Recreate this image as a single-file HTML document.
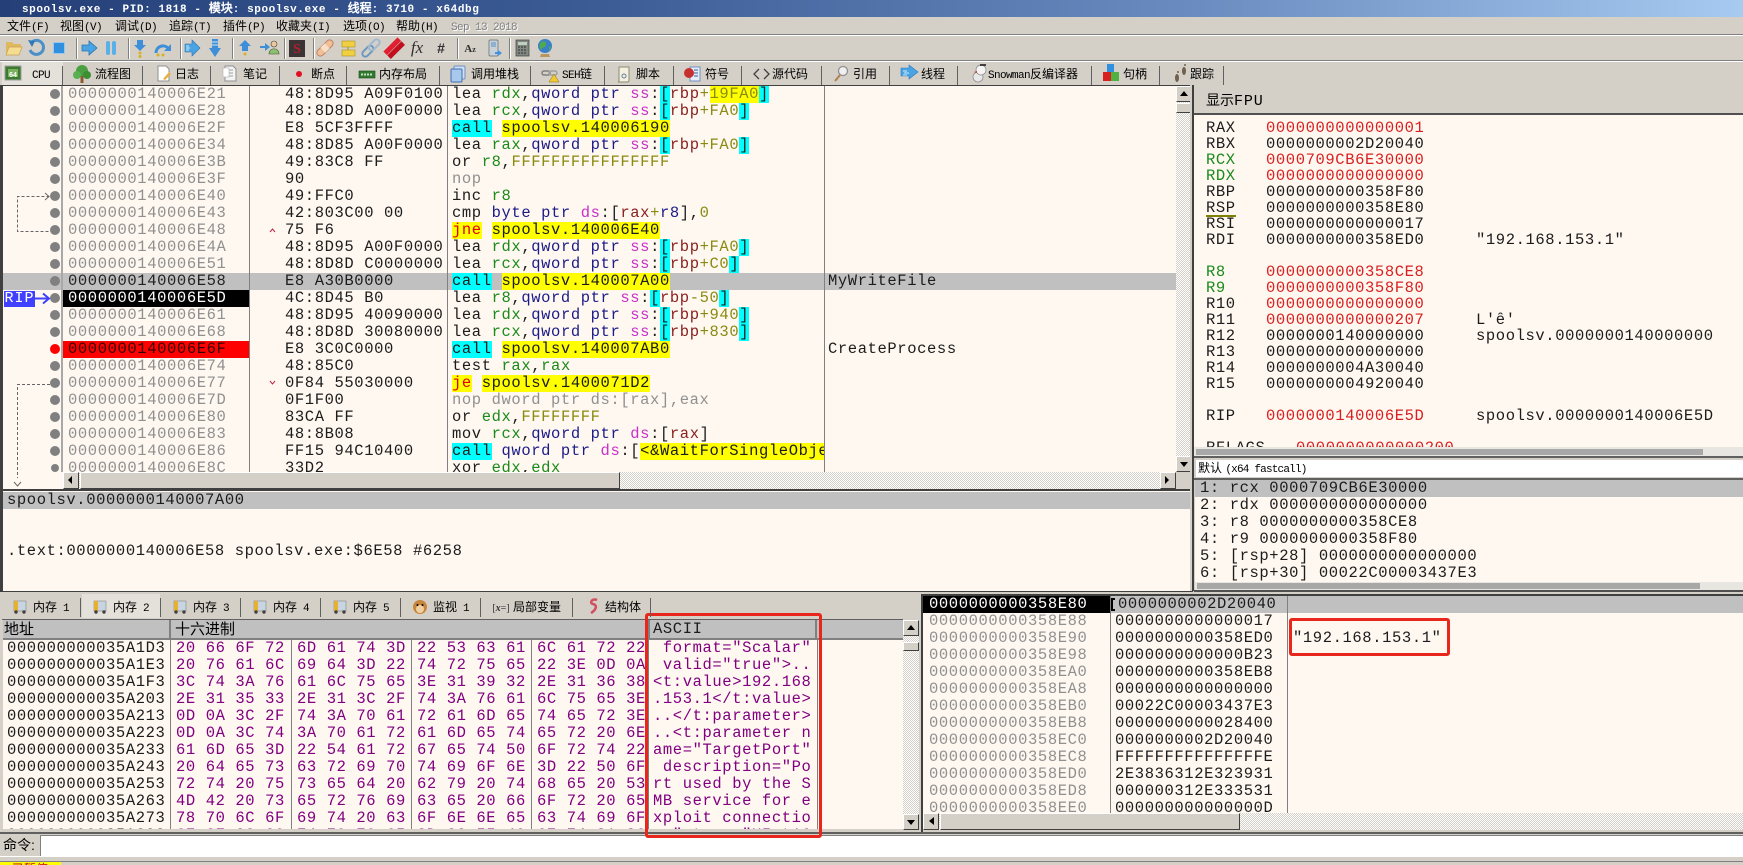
<!DOCTYPE html>
<html lang="zh"><head><meta charset="utf-8"><title>x64dbg</title>
<style>
html,body{margin:0;padding:0;background:#d4d0c8}
#app{position:relative;width:1743px;height:865px;overflow:hidden;background:#d4d0c8;font-family:"Liberation Mono","WenQuanYi Zen Hei",monospace;color:#000}
#app div{position:absolute;box-sizing:border-box}
.ui{font-family:"Liberation Sans","WenQuanYi Zen Hei","Noto Sans CJK SC",sans-serif;font-size:12px;line-height:14px;white-space:pre}
.ui i{font:normal 11px/14px "Liberation Mono",monospace;letter-spacing:-.6px}
.m{font-family:"Liberation Mono",monospace;font-size:15.5px;letter-spacing:.6px;line-height:17px;white-space:pre;color:#1c1c1c}
.pane{background:#fff8f0;overflow:hidden}
.chk{background:conic-gradient(#d4d0c8 25%,#fff 0 50%,#d4d0c8 0 75%,#fff 0) 0 0/2px 2px}
.btn{background:#d4d0c8;border:1px solid;border-color:#fff #404040 #404040 #fff}
.g{color:#1a8a1a}.n{color:#1a1a88}.p{color:#c830c8}.b{color:#8a2020}.o{color:#8a8a10}.r{color:#e00000}.a{color:#909090}.h{color:#d82020}
.c{background:#0ff;display:inline-block;height:17px}
.y{background:#ff0;display:inline-block;height:17px}
.v{background:#808080;width:1px}
.redbox{border:3px solid #e8261c;border-radius:3px}
</style></head><body>
<div id="app">

<!-- title -->
<div style="left:0;top:0;width:1743px;height:17px;background:linear-gradient(90deg,#253f78 0,#3c5c96 600px,#6a8cc0 1200px,#a6caf0 1743px)"></div>
<div style="left:22px;top:2px;color:#fff;font:bold 11px/14px 'Liberation Mono','WenQuanYi Zen Hei',monospace;letter-spacing:.58px;white-space:pre">spoolsv.exe - PID: 1818 - <span style="font-size:12px;letter-spacing:0">模块</span>: spoolsv.exe - <span style="font-size:12px;letter-spacing:0">线程</span>: 3710 - x64dbg</div>

<!-- menu -->
<div class="ui" style="left:7px;top:19px">文件<i>(F)</i></div>
<div class="ui" style="left:60px;top:19px">视图<i>(V)</i></div>
<div class="ui" style="left:115px;top:19px">调试<i>(D)</i></div>
<div class="ui" style="left:169px;top:19px">追踪<i>(T)</i></div>
<div class="ui" style="left:223px;top:19px">插件<i>(P)</i></div>
<div class="ui" style="left:276px;top:19px">收藏夹<i>(I)</i></div>
<div class="ui" style="left:343px;top:19px">选项<i>(O)</i></div>
<div class="ui" style="left:396px;top:19px">帮助<i>(H)</i></div>
<div class="ui" style="left:451px;top:19px;color:#808080;text-shadow:1px 1px #fff"><i>Sep 13 2018</i></div>
<div style="left:0;top:34px;width:1743px;height:1px;background:#808080"></div>
<div style="left:0;top:35px;width:1743px;height:1px;background:#fff"></div>
<div style="left:0;top:60px;width:1743px;height:1px;background:#808080"></div>
<div style="left:0;top:61px;width:1743px;height:1px;background:#fff"></div>

<!-- tabs text -->
<div style="left:2px;top:62px;width:61px;height:24px;background:#e4e1da"></div>
<div class="ui" style="left:32px;top:67px"><i>CPU</i></div>
<div class="ui" style="left:95px;top:67px">流程图</div>
<div class="ui" style="left:175px;top:67px">日志</div>
<div class="ui" style="left:243px;top:67px">笔记</div>
<div class="ui" style="left:311px;top:67px">断点</div>
<div class="ui" style="left:379px;top:67px">内存布局</div>
<div class="ui" style="left:471px;top:67px">调用堆栈</div>
<div class="ui" style="left:562px;top:67px"><i>SEH</i>链</div>
<div class="ui" style="left:636px;top:67px">脚本</div>
<div class="ui" style="left:705px;top:67px">符号</div>
<div class="ui" style="left:772px;top:67px">源代码</div>
<div class="ui" style="left:853px;top:67px">引用</div>
<div class="ui" style="left:921px;top:67px">线程</div>
<div class="ui" style="left:988px;top:67px"><i>Snowman</i>反编译器</div>
<div class="ui" style="left:1123px;top:67px">句柄</div>
<div class="ui" style="left:1190px;top:67px">跟踪</div>

<!-- disassembly -->
<div style="left:0;top:85px;width:1193px;height:405px;background:#404040"></div>
<div class="pane" style="left:3px;top:86px;width:1173px;height:386px"></div>
<div class="pane" style="left:3px;top:472px;width:60px;height:17px"></div>
<div style="left:0;top:86px;width:1176px;height:386px;overflow:hidden">
  <div style="left:3px;top:187px;width:1173px;height:17px;background:#c0c0c0"></div>
  <div style="left:63px;top:204px;width:186px;height:17px;background:#000"></div>
  <div style="left:63px;top:255px;width:186px;height:17px;background:#f00"></div>
  <div style="left:61px;top:0;width:2px;height:386px;background:#a8a8a8"></div>
  <div class="v" style="left:249px;top:0;height:386px"></div>
  <div class="v" style="left:447px;top:0;height:386px"></div>
  <div class="v" style="left:824px;top:0;height:386px"></div>
  <div class="m a" style="left:68px;top:0">0000000140006E21
0000000140006E28
0000000140006E2F
0000000140006E34
0000000140006E3B
0000000140006E3F
0000000140006E40
0000000140006E43
0000000140006E48
0000000140006E4A
0000000140006E51
<span style="color:#222">0000000140006E58</span>
<span style="color:#fff">0000000140006E5D</span>
0000000140006E61
0000000140006E68
<span style="color:#300">0000000140006E6F</span>
0000000140006E74
0000000140006E77
0000000140006E7D
0000000140006E80
0000000140006E83
0000000140006E86
0000000140006E8C</div>
  <div class="m" style="left:285px;top:0">48:8D95 A09F0100
48:8D8D A00F0000
E8 5CF3FFFF
48:8D85 A00F0000
49:83C8 FF
90
49:FFC0
42:803C00 00
75 F6
48:8D95 A00F0000
48:8D8D C0000000
E8 A30B0000
4C:8D45 B0
48:8D95 40090000
48:8D8D 30080000
E8 3C0C0000
48:85C0
0F84 55030000
0F1F00
83CA FF
48:8B08
FF15 94C10400
33D2</div>
  <div class="m" style="left:452px;top:0;width:372px;height:391px;overflow:hidden">lea <span class="g">rdx</span>,<span class="n">qword ptr</span> <span class="p">ss</span>:<span class="c">[</span><span class="b">rbp</span><span class="o">+</span><span class="y o">19FA0</span><span class="c">]</span>
lea <span class="g">rcx</span>,<span class="n">qword ptr</span> <span class="p">ss</span>:<span class="c">[</span><span class="b">rbp</span><span class="o">+FA0</span><span class="c">]</span>
<span class="c">call</span> <span class="y">spoolsv.140006190</span>
lea <span class="g">rax</span>,<span class="n">qword ptr</span> <span class="p">ss</span>:<span class="c">[</span><span class="b">rbp</span><span class="o">+FA0</span><span class="c">]</span>
or <span class="g">r8</span>,<span class="o">FFFFFFFFFFFFFFFF</span>
<span class="a">nop</span>
inc <span class="g">r8</span>
cmp <span class="n">byte ptr</span> <span class="p">ds</span>:[<span class="b">rax</span><span class="o">+</span><span class="n">r8</span>],<span class="o">0</span>
<span class="y r">jne</span> <span class="y">spoolsv.140006E40</span>
lea <span class="g">rdx</span>,<span class="n">qword ptr</span> <span class="p">ss</span>:<span class="c">[</span><span class="b">rbp</span><span class="o">+FA0</span><span class="c">]</span>
lea <span class="g">rcx</span>,<span class="n">qword ptr</span> <span class="p">ss</span>:<span class="c">[</span><span class="b">rbp</span><span class="o">+C0</span><span class="c">]</span>
<span class="c">call</span> <span class="y">spoolsv.140007A00</span>
lea <span class="g">r8</span>,<span class="n">qword ptr</span> <span class="p">ss</span>:<span class="c">[</span><span class="b">rbp</span><span class="o">-50</span><span class="c">]</span>
lea <span class="g">rdx</span>,<span class="n">qword ptr</span> <span class="p">ss</span>:<span class="c">[</span><span class="b">rbp</span><span class="o">+940</span><span class="c">]</span>
lea <span class="g">rcx</span>,<span class="n">qword ptr</span> <span class="p">ss</span>:<span class="c">[</span><span class="b">rbp</span><span class="o">+830</span><span class="c">]</span>
<span class="c">call</span> <span class="y">spoolsv.140007AB0</span>
test <span class="g">rax</span>,<span class="g">rax</span>
<span class="y r">je</span> <span class="y">spoolsv.1400071D2</span>
<span class="a">nop dword ptr ds:[rax],eax</span>
or <span class="g">edx</span>,<span class="o">FFFFFFFF</span>
mov <span class="g">rcx</span>,<span class="n">qword ptr</span> <span class="p">ds</span>:[<span class="b">rax</span>]
<span class="c">call</span> <span class="n">qword ptr</span> <span class="p">ds</span>:[<span class="y">&lt;&amp;WaitForSingleObject&gt;</span>]
xor <span class="g">edx</span>,<span class="g">edx</span></div>
  <div class="m" style="left:828px;top:187px">MyWriteFile</div>
  <div class="m" style="left:828px;top:255px">CreateProcess</div>
</div>
<div style="left:4px;top:291px;width:31px;height:16px;background:#4040ff;color:#fff;font:15px/16px 'Liberation Mono',monospace;letter-spacing:1px;text-align:center">RIP</div>

<!-- disasm scrollbars -->
<div class="chk" style="left:1176px;top:86px;width:16px;height:386px"></div>
<div class="btn" style="left:1176px;top:86px;width:16px;height:16px"></div>
<div class="btn" style="left:1176px;top:103px;width:16px;height:10px"></div>
<div class="btn" style="left:1176px;top:456px;width:16px;height:16px"></div>
<div style="left:1176px;top:472px;width:16px;height:17px;background:#d4d0c8"></div>
<div class="chk" style="left:63px;top:472px;width:1113px;height:17px"></div>
<div class="btn" style="left:63px;top:472px;width:16px;height:17px"></div>
<div class="btn" style="left:80px;top:472px;width:540px;height:17px"></div>
<div class="btn" style="left:1160px;top:472px;width:16px;height:17px"></div>

<!-- status -->
<div style="left:0;top:489px;width:1193px;height:103px;background:#404040"></div>
<div class="pane" style="left:3px;top:491px;width:1187px;height:100px"></div>
<div style="left:3px;top:492px;width:1187px;height:17px;background:#c0c0c0"></div>
<div class="m" style="left:7px;top:492px">spoolsv.0000000140007A00</div>
<div class="m" style="left:7px;top:543px">.text:0000000140006E58 spoolsv.exe:$6E58 #6258</div>

<!-- right registers -->
<div style="left:1190px;top:85px;width:4px;height:506px;background:#d4d0c8;border-right:2px solid #404040"></div>
<div class="ui" style="left:1206px;top:91px;font-size:14px;line-height:18px">显示<span style="font:15px/18px 'Liberation Mono',monospace;letter-spacing:.9px">FPU</span></div>
<div style="left:1194px;top:113px;width:549px;height:2px;background:#505050"></div>
<div class="pane" style="left:1194px;top:115px;width:549px;height:332px"></div>
<div style="left:1194px;top:115px;width:549px;height:332px;overflow:hidden">
<div class="m" style="left:12px;top:5px;line-height:16px">RAX
RBX
<span class="g">RCX</span>
<span class="g">RDX</span>
RBP
RSP
RSI
RDI

<span class="g">R8</span>
<span class="g">R9</span>
R10
R11
R12
R13
R14
R15

RIP

RFLAGS</div>
<div class="m" style="left:72px;top:5px;line-height:16px"><span class="h">0000000000000001</span>
0000000002D20040
<span class="h">0000709CB6E30000</span>
<span class="h">0000000000000000</span>
0000000000358F80
0000000000358E80
0000000000000017
0000000000358ED0

<span class="h">0000000000358CE8</span>
<span class="h">0000000000358F80</span>
<span class="h">0000000000000000</span>
<span class="h">0000000000000207</span>
0000000140000000
0000000000000000
0000000004A30040
0000000004920040

<span class="h">0000000140006E5D</span></div>
<div class="m h" style="left:102px;top:325px;line-height:16px">0000000000000200</div>
<div class="m" style="left:282px;top:117px;line-height:16px">"192.168.153.1"</div>
<div class="m" style="left:282px;top:197px;line-height:16px">L'ȇ'
spoolsv.0000000140000000</div>
<div class="m" style="left:282px;top:293px;line-height:16px">spoolsv.0000000140006E5D</div>
<div style="left:12px;top:100px;width:30px;height:2px;background:#808000"></div>
</div>
<div style="left:1194px;top:447px;width:549px;height:9px;background:#e8e6e0"></div>
<div style="left:1196px;top:449px;width:507px;height:6px;background:#a8a8a8"></div>
<div style="left:1194px;top:456px;width:549px;height:2px;background:#606060"></div>
<div style="left:1196px;top:460px;width:547px;height:17px;background:#fff"></div>
<div class="ui" style="left:1198px;top:461px">默认 <i style="letter-spacing:-.8px">(x64 fastcall)</i></div>
<div style="left:1194px;top:478px;width:549px;height:2px;background:#606060"></div>
<div class="pane" style="left:1195px;top:480px;width:548px;height:102px"></div>
<div style="left:1195px;top:480px;width:548px;height:17px;background:#c0c0c0"></div>
<div class="m" style="left:1200px;top:480px">1: rcx 0000709CB6E30000
2: rdx 0000000000000000
3: r8 0000000000358CE8
4: r9 0000000000358F80
5: [rsp+28] 0000000000000000
6: [rsp+30] 00022C00003437E3</div>
<div style="left:1195px;top:582px;width:548px;height:8px;background:#e8e6e0"></div>
<div style="left:1197px;top:583px;width:503px;height:6px;background:#a8a8a8"></div>
<div style="left:1194px;top:590px;width:549px;height:2px;background:#505050"></div>

<!-- memory tabs -->
<div style="left:82px;top:594px;width:78px;height:24px;background:#e4e1da"></div>
<div class="ui" style="left:33px;top:600px">内存<i> 1</i></div>
<div class="ui" style="left:113px;top:600px">内存<i> 2</i></div>
<div class="ui" style="left:193px;top:600px">内存<i> 3</i></div>
<div class="ui" style="left:273px;top:600px">内存<i> 4</i></div>
<div class="ui" style="left:353px;top:600px">内存<i> 5</i></div>
<div class="ui" style="left:433px;top:600px">监视<i> 1</i></div>
<div class="ui" style="left:513px;top:600px">局部变量</div>
<div class="ui" style="left:605px;top:600px">结构体</div>

<!-- memory dump -->
<div style="left:2px;top:619px;width:901px;height:1px;background:#606060"></div>
<div style="left:3px;top:620px;width:900px;height:18px;background:#c0c0c0"></div>
<div style="left:3px;top:638px;width:900px;height:2px;background:#808080"></div>
<div class="ui" style="left:4px;top:621px;font-size:15px;line-height:17px">地址</div>
<div class="ui" style="left:175px;top:621px;font-size:15px;line-height:17px">十六进制</div>
<div class="m" style="left:653px;top:621px">ASCII</div>
<div style="left:169px;top:620px;width:2px;height:20px;background:#808080"></div>
<div style="left:648px;top:620px;width:2px;height:20px;background:#808080"></div>
<div style="left:815px;top:620px;width:2px;height:20px;background:#808080"></div>
<div class="pane" style="left:3px;top:640px;width:900px;height:189px">
 <div class="v" style="left:167px;top:0;height:189px"></div>
 <div class="v" style="left:288px;top:0;height:189px"></div>
 <div class="v" style="left:408px;top:0;height:189px"></div>
 <div class="v" style="left:528px;top:0;height:189px"></div>
 <div class="v" style="left:645px;top:0;height:189px"></div>
 <div class="v" style="left:814px;top:0;height:189px"></div>
 <div class="m" style="left:4px;top:0">000000000035A1D3
000000000035A1E3
000000000035A1F3
000000000035A203
000000000035A213
000000000035A223
000000000035A233
000000000035A243
000000000035A253
000000000035A263
000000000035A273
000000000035A283</div>
 <div class="m" style="left:173px;top:0;color:#800080">20 66 6F 72
20 76 61 6C
3C 74 3A 76
2E 31 35 33
0D 0A 3C 2F
0D 0A 3C 74
61 6D 65 3D
20 64 65 73
72 74 20 75
4D 42 20 73
78 70 6C 6F
6E 2E 22 20</div>
 <div class="m" style="left:294px;top:0;color:#800080">6D 61 74 3D
69 64 3D 22
61 6C 75 65
2E 31 3C 2F
74 3A 70 61
3A 70 61 72
22 54 61 72
63 72 69 70
73 65 64 20
65 72 76 69
69 74 20 63
74 79 70 65</div>
 <div class="m" style="left:414px;top:0;color:#800080">22 53 63 61
74 72 75 65
3E 31 39 32
74 3A 76 61
72 61 6D 65
61 6D 65 74
67 65 74 50
74 69 6F 6E
62 79 20 74
63 65 20 66
6F 6E 6E 65
3D 22 55 49</div>
 <div class="m" style="left:534px;top:0;color:#800080">6C 61 72 22
22 3E 0D 0A
2E 31 36 38
6C 75 65 3E
74 65 72 3E
65 72 20 6E
6F 72 74 22
3D 22 50 6F
68 65 20 53
6F 72 20 65
63 74 69 6F
6E 74 31 36</div>
 <div class="m" style="left:650px;top:0;color:#800080"> format="Scalar"
 valid="true"&gt;..
&lt;t:value&gt;192.168
.153.1&lt;/t:value&gt;
..&lt;/t:parameter&gt;
..&lt;t:parameter n
ame="TargetPort"
 description="Po
rt used by the S
MB service for e
xploit connectio
n." type="UInt16</div>
</div>
<div style="left:0;top:832px;width:1743px;height:2px;background:#606060"></div>

<!-- memory vscroll -->
<div class="chk" style="left:903px;top:620px;width:16px;height:210px"></div>
<div class="btn" style="left:903px;top:620px;width:16px;height:16px"></div>
<div class="btn" style="left:903px;top:642px;width:16px;height:9px"></div>
<div class="btn" style="left:903px;top:814px;width:16px;height:16px"></div>

<!-- stack -->
<div style="left:921px;top:594px;width:822px;height:2px;background:#404040"></div>
<div style="left:921px;top:594px;width:2px;height:238px;background:#404040"></div>
<div class="pane" style="left:923px;top:596px;width:820px;height:217px">
 <div style="left:0;top:0;width:187px;height:17px;background:#000"></div>
 <div style="left:187px;top:0;width:633px;height:17px;background:#c0c0c0"></div>
 <div class="v" style="left:187px;top:0;height:217px"></div>
 <div class="v" style="left:364px;top:0;height:217px"></div>
 <div class="m a" style="left:6px;top:0"><span style="color:#fff">0000000000358E80</span>
0000000000358E88
0000000000358E90
0000000000358E98
0000000000358EA0
0000000000358EA8
0000000000358EB0
0000000000358EB8
0000000000358EC0
0000000000358EC8
0000000000358ED0
0000000000358ED8
0000000000358EE0</div>
 <div class="m" style="left:195px;top:0">0000000002D20040</div>
 <div class="m" style="left:192px;top:17px">0000000000000017
0000000000358ED0
0000000000000B23
0000000000358EB8
0000000000000000
00022C00003437E3
0000000000028400
0000000002D20040
FFFFFFFFFFFFFFFE
2E3836312E323931
000000312E333531
000000000000000D</div>
 <div class="m" style="left:370px;top:34px">"192.168.153.1"</div>
</div>
<div class="chk" style="left:923px;top:813px;width:820px;height:17px"></div>
<div class="btn" style="left:923px;top:813px;width:16px;height:17px"></div>
<div class="btn" style="left:940px;top:813px;width:300px;height:17px"></div>

<!-- command -->
<div class="ui" style="left:3px;top:838px;font-size:14px;line-height:15px">命令:</div>
<div style="left:40px;top:835px;width:1703px;height:21px;background:#fff;border-top:1px solid #808080;border-left:1px solid #808080"></div>
<div style="left:0;top:856px;width:1743px;height:1px;background:#fff"></div>
<div style="left:0;top:861px;width:1743px;height:1px;background:#808080"></div>
<div style="left:0;top:862px;width:61px;height:3px;background:#ff0;overflow:hidden"><div class="ui" style="left:12px;top:0;color:#c00000;font-size:12px">已暂停</div></div>

<!-- red boxes -->
<div class="redbox" style="left:645px;top:613px;width:177px;height:225px"></div>
<div class="redbox" style="left:1289px;top:618px;width:161px;height:38px"></div>

<!-- icons overlay -->
<svg style="position:absolute;left:0;top:0" width="1743" height="865" viewBox="0 0 1743 865">
<!-- gutter dots -->
<g fill="#808080">
<circle cx="55" cy="94" r="5"/><circle cx="55" cy="111" r="5"/><circle cx="55" cy="128" r="5"/><circle cx="55" cy="145" r="5"/><circle cx="55" cy="162" r="5"/><circle cx="55" cy="179" r="5"/><circle cx="55" cy="196" r="5"/><circle cx="55" cy="213" r="5"/><circle cx="55" cy="230" r="5"/><circle cx="55" cy="247" r="5"/><circle cx="55" cy="264" r="5"/><circle cx="55" cy="281" r="5"/><circle cx="55" cy="298" r="5"/><circle cx="55" cy="315" r="5"/><circle cx="55" cy="332" r="5"/><circle cx="55" cy="366" r="5"/><circle cx="55" cy="383" r="5"/><circle cx="55" cy="400" r="5"/><circle cx="55" cy="417" r="5"/><circle cx="55" cy="434" r="5"/><circle cx="55" cy="451" r="5"/><circle cx="55" cy="468" r="4"/>
</g>
<circle cx="55" cy="349" r="5" fill="#f00"/>
<!-- jump lines -->
<g fill="none" stroke="#666" stroke-dasharray="3 2">
<path d="M49.500 196.500H17.500V231.500H49"/>
<path d="M50 384.500H17.500V478"/>
</g>
<path d="M45 193l4 3.500-4 3.500" fill="none" stroke="#666"/>
<path d="M14 482l3.500 4 3.500-4" fill="none" stroke="#666"/>
<!-- RIP arrow -->
<path d="M35 298.500H48M43 293.500l6 5-6 5" fill="none" stroke="#4040ff" stroke-width="2"/>
<!-- jump carets -->
<path d="M270 232l2.500-3 2.500 3" fill="none" stroke="#c02040"/>
<path d="M270 381l2.500 3 2.500-3" fill="none" stroke="#c02040"/>
<!-- scrollbar arrows -->
<path d="M1180 96h8l-4-5z M1180 462h8l-4 5z" fill="#000"/>
<path d="M72 476v8l-4-4z M1165 476v8l4-4z" fill="#000"/>
<path d="M907 630h8l-4-5z M907 820h8l-4 5z M934 817v8l-5-4z" fill="#000"/>
<!-- stack bracket -->
<path d="M1115 599h-3v11h3" fill="none" stroke="#000" stroke-width="2"/>

<!-- toolbar separators -->
<g stroke="#808080">
<path d="M76.500 38v21M128.500 38v21M180.500 38v21M232.500 38v21M284.500 38v21M313.500 38v21M457.500 38v21M509.500 38v21"/>
</g>
<g stroke="#fff">
<path d="M77.500 38v21M129.500 38v21M181.500 38v21M233.500 38v21M285.500 38v21M314.500 38v21M458.500 38v21M510.500 38v21"/>
</g>
<!-- folder -->
<path d="M6 42h6l2 2h7v3H10l-4 8z" fill="#e0b860"/><path d="M6 55l3-8h13l-3 8z" fill="#f4dc90" stroke="#c8a050" stroke-width=".7"/>
<!-- restart -->
<path d="M31 43a7 7 0 1 1-1 7" fill="none" stroke="#4a8fc8" stroke-width="3"/><path d="M28 40l7 1-3 6z" fill="#2f78b8"/>
<!-- stop -->
<rect x="53.500" y="42.500" width="11" height="11" fill="#2f90e0" stroke="#9cc8ec"/>
<!-- run -->
<path d="M82 45h7v-4l8 7-8 7v-4h-7z" fill="#4aa4e4" stroke="#2a70b0" stroke-width=".8"/>
<!-- pause -->
<rect x="106" y="41" width="4" height="14" rx="2" fill="#58b0e8"/><rect x="112" y="41" width="4" height="14" rx="2" fill="#58b0e8"/>
<!-- step into -->
<path d="M137 40h6v5h3l-6 6-6-6h3z" fill="#3f8fd8"/><circle cx="140" cy="53" r="1.500" fill="#d8b020"/><circle cx="140" cy="56.500" r="1.500" fill="#d8b020"/>
<!-- step over -->
<path d="M156 53a7 7 0 0 1 12-5" fill="none" stroke="#3f8fd8" stroke-width="3"/><path d="M171 44v7h-7z" fill="#3f8fd8"/><circle cx="163" cy="55" r="1.500" fill="#d8b020"/><circle cx="158" cy="55" r="1.500" fill="#d8b020"/>
<!-- trace into -->
<path d="M185 44h7v-4l8 8-8 8v-4h-7z" fill="#4aa4e4" stroke="#2a70b0" stroke-width=".6"/><path d="M186 46h3M186 48h4M186 50h3" stroke="#d0e8f8"/>
<!-- trace over -->
<path d="M212 39h6v9h3l-6 9-6-9h3z" fill="#3f8fd8"/><path d="M212 42h6M212 45h6" stroke="#cfe4f4"/>
<!-- exec till return -->
<path d="M245 40l6 6h-3v5h-6v-5h-3z" fill="#3f8fd8"/><circle cx="245" cy="54" r="1.500" fill="#d8b020"/>
<!-- run to user -->
<path d="M260 46h5v-3l5 4-5 4v-3h-5z" fill="#3f8fd8"/><circle cx="274" cy="44" r="3" fill="#e8c8a0" stroke="#504030" stroke-width=".6"/><path d="M269 54c0-7 10-7 10 0z" fill="#8ac070" stroke="#405030" stroke-width=".6"/>
<!-- S -->
<rect x="289" y="40" width="16" height="17" fill="#3c3434"/><text x="297" y="53" font-family="Liberation Serif" font-size="14" font-weight="bold" fill="#b02030" text-anchor="middle">S</text>
<!-- bandage -->
<g transform="rotate(-45 325 48)"><rect x="315" y="44.500" width="20" height="7" rx="3.500" fill="#f0c098" stroke="#c08060"/><rect x="322" y="44.500" width="6" height="7" fill="#f8e0c8"/></g>
<!-- yellow -->
<rect x="342" y="41" width="13" height="6" fill="#f0d040" stroke="#a89020" stroke-width=".6"/><rect x="342" y="50" width="13" height="6" fill="#f0d040" stroke="#a89020" stroke-width=".6"/><path d="M348 47v3" stroke="#a89020"/>
<!-- link -->
<g transform="rotate(-45 371 48)"><rect x="360" y="45" width="13" height="6" rx="3" fill="none" stroke="#6a98c0" stroke-width="2"/><rect x="369" y="45" width="13" height="6" rx="3" fill="none" stroke="#a0b8d0" stroke-width="2"/></g>
<!-- red -->
<g transform="rotate(-45 394 48)"><rect x="384" y="43" width="20" height="5" fill="#e02030"/><rect x="384" y="48.500" width="20" height="5" fill="#c01020"/></g>
<text x="417" y="53" font-family="Liberation Serif" font-style="italic" font-size="17" fill="#303030" text-anchor="middle">fx</text>
<text x="441" y="53" font-family="Liberation Sans" font-weight="bold" font-size="14" fill="#303030" text-anchor="middle">#</text>
<text x="470" y="52" font-family="Liberation Serif" font-weight="bold" font-size="11" fill="#303030" text-anchor="middle">A<tspan font-size="8">z</tspan></text>
<!-- phone -->
<rect x="489" y="40" width="9" height="16" rx="1" fill="#c8d0d8" stroke="#606870" stroke-width=".7"/><rect x="491" y="42" width="5" height="5" fill="#90b0d0"/><path d="M495 52h3v-2l4 3-4 3v-2h-3z" fill="#4090e0"/>
<!-- calc -->
<rect x="516" y="40" width="13" height="16" fill="#808880" stroke="#404040" stroke-width=".7"/><rect x="518" y="42" width="9" height="3" fill="#c0d0c0"/><path d="M518 47h9M518 50h9M518 53h9" stroke="#303030" stroke-dasharray="2 1"/>
<!-- globe -->
<circle cx="545" cy="46" r="7" fill="#3a80c8"/><path d="M541 42c3-2 6 0 5 3s-4 2-5 5c-2-2-2-5 0-8zM549 46l2 1-2 4z" fill="#50a850"/><path d="M541 54h8l1 3h-10z" fill="#b89860"/>

<!-- tab separators -->
<g stroke="#606060">
<path d="M62.500 66v19M142.500 66v19M210.500 66v19M279.500 66v19M346.500 66v19M439.500 66v19M530.500 66v19M604.500 66v19M673.500 66v19M741.500 66v19M821.500 66v19M889.500 66v19M957.500 66v19M1091.500 66v19M1159.500 66v19M1223.500 66v19"/>
<path d="M80.500 598v19M160.500 598v19M240.500 598v19M320.500 598v19M400.500 598v19M480.500 598v19M572.500 598v19M650.500 598v19"/>
</g>
<!-- tab icons -->
<rect x="5" y="66" width="16" height="14" fill="#3c7a30" stroke="#a0a0a0"/><rect x="8" y="69" width="10" height="8" fill="#7ab060"/><text x="13" y="77" font-family="Liberation Sans" font-size="7" font-weight="bold" fill="#fff" text-anchor="middle">64</text>
<circle cx="82" cy="71" r="6" fill="#4aa040"/><circle cx="77" cy="75" r="4" fill="#5ab050"/><circle cx="87" cy="75" r="4" fill="#3c9034"/><rect x="80.500" y="76" width="3" height="7" fill="#8a5a30"/>
<path d="M158 66h8l3 3v12h-11z" fill="#fff" stroke="#909090"/><path d="M163 79l6-7 2 2-6 6z" fill="#e8b040"/>
<path d="M225 66h8l3 3v12h-11z" fill="#f4f4f4" stroke="#909090"/><path d="M228 70h5M228 73h5M228 76h5" stroke="#a0a0a0"/><rect x="223" y="68" width="6" height="9" fill="#fff" stroke="#b0b0b0" stroke-width=".6"/>
<circle cx="299" cy="74" r="3" fill="#e01020"/>
<rect x="359" y="71" width="16" height="7" fill="#2f7a2f" stroke="#1a4a1a" stroke-width=".6"/><path d="M361 74.500h12" stroke="#c8e0c0" stroke-width="2" stroke-dasharray="2 1"/>
<rect x="454" y="66" width="11" height="13" rx="1" fill="#cfe0f4" stroke="#7090c0"/><rect x="451" y="69" width="11" height="13" rx="1" fill="#a8c8ec" stroke="#3f70b0"/>
<rect x="542" y="71" width="8" height="4" rx="2" fill="none" stroke="#808080" stroke-width="1.500"/><rect x="549" y="71" width="8" height="4" rx="2" fill="none" stroke="#a0a0a0" stroke-width="1.500"/><path d="M554 74l5 8h-10z" fill="#f0c830" stroke="#907010" stroke-width=".5"/>
<path d="M619 67h10v13c0 1.500-1 2-2 2h-9c1 0 1-1 1-2z" fill="#f4f0e0" stroke="#8a8a70"/><circle cx="624" cy="76" r="2" fill="none" stroke="#6080a0"/>
<rect x="690" y="67" width="10" height="14" fill="#e8eef8" stroke="#7090c0"/><path d="M694 70h4M694 73h4M694 76h4" stroke="#3060a0"/><circle cx="689" cy="73" r="5" fill="#c83030"/>
<path d="M762 69l-5 5 5 5M767 69l5 5-5 5" fill="none" stroke="#404040" stroke-width="1.300" transform="translate(-3 0)"/>
<circle cx="843" cy="71" r="4.500" fill="#f0f0f0" stroke="#909090" stroke-width="1.300"/><path d="M840 75l-5 6" stroke="#b08050" stroke-width="2"/>
<path d="M901 68h8v-3l9 7-9 7v-3h-8z" fill="#4aa4e4" stroke="#2a78c0" stroke-width=".6"/><path d="M903 71h4M904 73h5M903 75h4" stroke="#d0ecf8"/>
<circle cx="978" cy="77" r="5" fill="#e8e8e8" stroke="#808080" stroke-width=".7"/><circle cx="981" cy="70" r="5" fill="#f4f4f4" stroke="#808080" stroke-width=".7"/><path d="M977 71l-3 1 3 1z" fill="#d04020"/><rect x="980" y="64" width="6" height="2" fill="#404040"/>
<rect x="1107" y="64" width="7" height="8" fill="#3090e0"/><rect x="1103" y="72" width="8" height="9" fill="#d82020"/><rect x="1111" y="72" width="8" height="9" fill="#50b040"/>
<ellipse cx="1177" cy="78" rx="2" ry="4" fill="#706050"/><ellipse cx="1184" cy="71" rx="2" ry="4" fill="#706050"/><circle cx="1178" cy="72" r="1" fill="#706050"/><circle cx="1185" cy="65" r="1" fill="#706050"/>

<!-- memory tab icons -->
<g>
<rect x="14" y="601" width="12" height="10" fill="#c8d4e0" stroke="#808890" stroke-width=".6"/><rect x="14" y="601" width="4" height="10" fill="#e8b030"/><circle cx="16" cy="612" r="1.700" fill="#404040"/><circle cx="24" cy="612" r="1.700" fill="#404040"/>
<rect x="94" y="601" width="12" height="10" fill="#c8d4e0" stroke="#808890" stroke-width=".6"/><rect x="94" y="601" width="4" height="10" fill="#e8b030"/><circle cx="96" cy="612" r="1.700" fill="#404040"/><circle cx="104" cy="612" r="1.700" fill="#404040"/>
<rect x="174" y="601" width="12" height="10" fill="#c8d4e0" stroke="#808890" stroke-width=".6"/><rect x="174" y="601" width="4" height="10" fill="#e8b030"/><circle cx="176" cy="612" r="1.700" fill="#404040"/><circle cx="184" cy="612" r="1.700" fill="#404040"/>
<rect x="254" y="601" width="12" height="10" fill="#c8d4e0" stroke="#808890" stroke-width=".6"/><rect x="254" y="601" width="4" height="10" fill="#e8b030"/><circle cx="256" cy="612" r="1.700" fill="#404040"/><circle cx="264" cy="612" r="1.700" fill="#404040"/>
<rect x="334" y="601" width="12" height="10" fill="#c8d4e0" stroke="#808890" stroke-width=".6"/><rect x="334" y="601" width="4" height="10" fill="#e8b030"/><circle cx="336" cy="612" r="1.700" fill="#404040"/><circle cx="344" cy="612" r="1.700" fill="#404040"/>
</g>
<circle cx="420" cy="607" r="7" fill="#c8863c"/><circle cx="420" cy="609" r="4" fill="#f0d0a0"/><circle cx="417.500" cy="605" r="1" fill="#000"/><circle cx="422.500" cy="605" r="1" fill="#000"/>
<text x="501" y="611" font-family="Liberation Serif" font-size="10" fill="#303030" text-anchor="middle">[<tspan font-style="italic" font-weight="bold">x</tspan>=]</text>
<path d="M597 600c-5-2-8 3-4 4 5 1 3 6-2 9" fill="none" stroke="#d05060" stroke-width="2.500"/>
</svg>
</div>
</body></html>
